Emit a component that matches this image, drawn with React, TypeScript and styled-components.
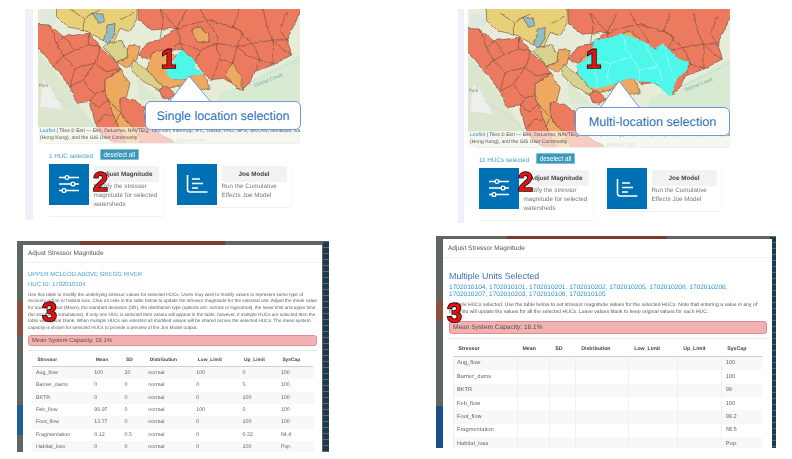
import React from 'react';
import styled, { createGlobalStyle } from 'styled-components';

const Global = createGlobalStyle`
  html, body { margin: 0; padding: 0; background: #fff; }
  body {
    width: 792px;
    height: 459px;
    overflow: hidden;
    font-family: "Liberation Sans", Arial, sans-serif;
    text-rendering: geometricPrecision;
  }
`;

const Page = styled.div`
  display: grid;
  grid-template-columns: 436px 356px;
  grid-template-rows: 235px 224px;
  width: 792px;
  height: 459px;
  overflow: hidden;
  filter: blur(0.45px);
`;

// top row: screenshot of the selection page
const SelectionShot = styled.section<{ $left: number; $strip: number; $gap: number; $width: number; $height: number }>`
  position: relative;
  display: flex;
  align-items: stretch;
  gap: ${(p) => p.$gap}px;
  margin: 9px 0 0 ${(p) => p.$left}px;
  width: ${(p) => p.$width}px;
  height: ${(p) => p.$height}px;
  &::before {
    content: '';
    flex: none;
    width: ${(p) => p.$strip}px;
    background: #eef1f7;
  }
`;

const ShotBody = styled.div`
  flex: 1;
  display: flex;
  flex-direction: column;
  min-width: 0;
`;

const MapFrame = styled.div<{ $height: number }>`
  position: relative;
  height: ${(p) => p.$height}px;
  overflow: hidden;
  background: #e7ecd9;
`;

const MapSvg = styled.svg`
  display: block;
  width: 100%;
  height: 100%;
`;

const Attribution = styled.div`
  position: absolute;
  left: 0;
  right: 0;
  bottom: 0;
  height: 15px;
  padding: 1px 0 0 2px;
  background: rgba(255, 255, 255, 0.62);
  font-size: 5.05px;
  line-height: 7px;
  color: #555;
  white-space: nowrap;
  overflow: hidden;
  b {
    font-weight: 400;
    color: #3f8fc0;
  }
`;

const Callout = styled.div<{ $left: number; $top: number; $width: number; $height: number; $size: number }>`
  position: absolute;
  left: ${(p) => p.$left}px;
  top: ${(p) => p.$top}px;
  width: ${(p) => p.$width}px;
  height: ${(p) => p.$height}px;
  display: flex;
  align-items: center;
  justify-content: center;
  box-sizing: border-box;
  background: #fff;
  border: 1px solid #6f97d8;
  border-radius: 6px;
  color: #1f70b8;
  font-size: ${(p) => p.$size}px;
  white-space: nowrap;
`;

const CalloutTip = styled.svg<{ $left: number; $top: number }>`
  position: absolute;
  left: ${(p) => p.$left}px;
  top: ${(p) => p.$top}px;
  overflow: visible;
  z-index: 1;
`;

const SelectRow = styled.div`
  display: flex;
  align-items: center;
  gap: 7px;
  border-top: 1px solid #eef0f4;
  margin-left: 7px;
  padding: 5px 0 0 4px;
`;

const SelectedCount = styled.span`
  font-size: 6.3px;
  color: #45a3c4;
  padding-top: 3px;
`;

const Deselect = styled.button`
  height: 11px;
  padding: 0 2.5px;
  border: 0.5px solid #7cc0d5;
  border-radius: 1px;
  background: #3e97b6;
  color: #fff;
  font: 6.3px "Liberation Sans", Arial, sans-serif;
  line-height: 10px;
`;

const CardRow = styled.div`
  display: flex;
  gap: 14px;
  margin: 4px 0 0 11px;
`;

const ToolCard = styled.div<{ $tall: boolean }>`
  display: flex;
  gap: 4.5px;
  width: 114px;
  height: ${(p) => (p.$tall ? 52 : 43)}px;
  box-shadow: 0 0.5px 1px #f1f1f1, 0.5px 0 1px #f6f6f6;
`;

const IconTile = styled.div`
  flex: none;
  display: flex;
  align-items: center;
  justify-content: center;
  width: 40px;
  height: 40.5px;
  background: #0070b4;
`;

const CardText = styled.div`
  display: flex;
  flex-direction: column;
  padding-top: 2px;
`;

const CardButton = styled.div`
  display: flex;
  align-items: center;
  justify-content: center;
  width: 65px;
  height: 16px;
  background: #f2f2f2;
  border-radius: 1px;
  font-size: 6.3px;
  font-weight: 700;
  color: #444;
`;

const CardDesc = styled.p`
  margin: 0;
  font-size: 6.3px;
  line-height: 9px;
  color: #777;
  white-space: nowrap;
`;

// numbers painted over the figure
const Marker = styled.span<{ $left: number; $top: number }>`
  position: absolute;
  left: ${(p) => p.$left}px;
  top: ${(p) => p.$top}px;
  z-index: 3;
  font-size: 27px;
  line-height: 27px;
  font-weight: 700;
  color: #e8100f;
  -webkit-text-stroke: 1.6px #111;
  paint-order: stroke fill;
`;

// bottom row: screenshot of the modal
const Backdrop = styled.section<{ $left: number; $top: number; $width: number; $height: number; $pad: string; $map: string }>`
  position: relative;
  box-sizing: border-box;
  margin: ${(p) => p.$top}px 0 0 ${(p) => p.$left}px;
  width: ${(p) => p.$width}px;
  height: ${(p) => p.$height}px;
  padding: ${(p) => p.$pad};
  overflow: hidden;
  background:
    repeating-linear-gradient(180deg, rgba(160, 140, 120, 0.55) 0 1px, transparent 1px 6px) right / 6px 100% no-repeat,
    linear-gradient(#1c3a52, #1c3a52) right / 6px 100% no-repeat,
    ${(p) => p.$map},
    #5f6660;
`;

const Modal = styled.div`
  height: 100%;
  background: #fff;
  overflow: hidden;
`;

const ModalHeader = styled.div<{ $height: number; $size: number }>`
  display: flex;
  align-items: center;
  box-sizing: border-box;
  height: ${(p) => p.$height}px;
  padding-left: 5px;
  border-bottom: 0.5px solid #f0f0f0;
  font-size: ${(p) => p.$size}px;
  color: #555;
`;

const ModalBody = styled.div<{ $pad: string }>`
  padding: ${(p) => p.$pad};
`;

const UnitName = styled.div`
  font-size: 6px;
  line-height: 10px;
  color: #4a9fd1;
  white-space: nowrap;
`;

const MultiTitle = styled.div`
  font-size: 8.9px;
  line-height: 12px;
  color: #3f70b2;
`;

const HucList = styled.div`
  margin-top: 2.2px;
  font-size: 6.55px;
  line-height: 7px;
  color: #2f93cc;
  white-space: nowrap;
`;

const Blurb = styled.p<{ $top: number; $line: number; $size: number }>`
  margin: ${(p) => p.$top}px 0 0;
  font-size: ${(p) => p.$size}px;
  line-height: ${(p) => p.$line}px;
  color: #5a5a5a;
  white-space: nowrap;
`;

const CapacityAlert = styled.div<{ $height: number; $top: number; $size: number }>`
  display: flex;
  align-items: center;
  box-sizing: border-box;
  height: ${(p) => p.$height}px;
  margin-top: ${(p) => p.$top}px;
  padding-left: 3px;
  background: #f1b2b4;
  border: 0.5px solid #e58b8f;
  border-radius: 3px;
  font-size: ${(p) => p.$size}px;
  color: #5c4a44;
`;

const Rule = styled.div<{ $top: number }>`
  height: 1px;
  margin-top: ${(p) => p.$top}px;
  background: #e8ebef;
`;

const StressTable = styled.table<{ $width: number; $cols: string; $head: number; $row: number; $size: number; $grid: boolean }>`
  display: block;
  width: ${(p) => p.$width}px;
  margin: 3px 0 0 3.5px;
  font-size: ${(p) => p.$size}px;
  color: #666;
  thead, tbody {
    display: block;
  }
  tr {
    display: grid;
    grid-template-columns: ${(p) => p.$cols};
  }
  th {
    display: flex;
    align-items: center;
    box-sizing: border-box;
    height: ${(p) => p.$head}px;
    padding: 0 0 0 6px;
    font-size: 0.92em;
    font-weight: 700;
    color: #444;
    border-bottom: 1px solid #cfcfcf;
  }
  td {
    display: flex;
    align-items: center;
    box-sizing: border-box;
    height: ${(p) => p.$row}px;
    padding: 0 0 0 3.5px;
    border-left: 0.5px solid ${(p) => (p.$grid ? '#f0f0f0' : 'transparent')};
  }
  tbody tr:nth-child(odd) {
    background: #f8f8f8;
  }
`;

const columns = ['Stressor', 'Mean', 'SD', 'Distribution', 'Low_Limit', 'Up_Limit', 'SysCap'];

const singleRows = [
  ['Aug_flow', '100', '20', 'normal', '100', '0', '100'],
  ['Barrier_dams', '0', '0', 'normal', '0', '5', '100'],
  ['BKTR', '0', '0', 'normal', '0', '100', '100'],
  ['Feb_flow', '99.97', '0', 'normal', '100', '0', '100'],
  ['Foot_flow', '13.77', '0', 'normal', '0', '100', '100'],
  ['Fragmentation', '0.12', '0.5', 'normal', '0', '0.32', '64.4'],
  ['Habitat_loss', '0', '0', 'normal', '0', '100', 'Pop.'],
];

const multiRows = [
  ['Aug_flow', '', '', '', '', '', '100'],
  ['Barrier_dams', '', '', '', '', '', '100'],
  ['BKTR', '', '', '', '', '', '99'],
  ['Feb_flow', '', '', '', '', '', '100'],
  ['Foot_flow', '', '', '', '', '', '99.2'],
  ['Fragmentation', '', '', '', '', '', '68.5'],
  ['Habitat_loss', '', '', '', '', '', 'Pop.'],
];

const red = '#ec7a5e';
const orange = '#eca95f';
const yellow = '#e8d078';
const olive = '#d9d28c';
const lake = '#90bdc9';
const cyan = '#4ef8ea';

const basins: [string, string][] = [
  ['105,-40 355,-40 350,60 330,95 300,85 280,130 240,115 190,90 140,80 110,50', yellow],
  ['218,40 248,42 255,65 235,70', lake],
  ['262,75 285,70 283,105 268,135 250,120', lake],
  ['265,130 300,122 325,150 320,175 290,185 250,140', olive],
  ['325,135 360,140 350,180 320,205 290,185 320,175', orange],
  ['340,180 380,210 430,260 420,272 370,245 333,210', olive],
  ['355,-40 860,-40 845,27 825,70 800,120 815,165 760,195 705,215 690,250 660,270 640,255 610,235 575,240 550,220 525,185 510,165 487,150 440,150 400,185 355,165 385,125 420,120 470,85 395,90 355,60', red],
  ['-20,70 90,75 130,110 205,100 240,140 290,185 300,210 255,240 255,270 265,300 300,340 340,385 380,430 300,445 230,390 210,305 170,310 150,260 100,200 54,145', red],
  ['380,210 395,160 430,150 470,165 440,210 465,240 500,235 530,220 550,222 570,265 530,275 505,250 450,265 430,260', orange],
  ['515,90 535,82 570,100 565,130 530,125', orange],
  ['615,225 640,190 665,235 668,275 640,255', orange],
  ['255,240 300,210 330,250 320,290 300,300 305,350 350,385 365,430 320,440 280,345 265,300 255,270', orange],
  ['300,295 340,300 370,320 375,360 400,390 470,430 490,450 380,450 340,385 300,340', red],
  ['418,268 440,260 470,285 445,297 425,290', red],
];

const ridges = [
  '90,75 110,130 130,110 165,150 130,170 100,200',
  '130,170 165,205 150,260 190,240 225,285 210,305',
  '165,150 205,135 240,140 225,190 260,215 300,210',
  '225,190 190,240',
  '130,170 110,130',
  '205,100 205,135',
  '165,205 225,190',
  '225,285 255,270',
  '210,305 240,320 265,300',
  '230,370 255,345 280,345',
  '470,85 480,130 440,150',
  '480,130 540,150 590,130 650,140 700,130 760,120 800,120',
  '590,130 600,180 575,240',
  '650,140 640,190',
  '700,130 720,180 705,215',
  '420,27 470,85 560,60 640,80 700,130',
  '560,60 540,27',
  '640,80 660,27',
  '730,27 740,80 760,120 760,195',
  '800,40 780,90 800,120',
  '600,180 640,190',
  '540,150 525,185',
  '480,130 490,150',
  '650,140 690,170 720,180',
  '760,120 790,150 815,165',
  '720,180 760,195',
  '420,120 430,60 420,27',
  '470,85 500,27',
  '560,60 590,100 590,130',
  '640,80 670,100 650,140',
  '150,27 190,55 240,30',
  '190,55 190,90',
  '300,60 340,40',
  '265,300 300,340 285,370',
];

const selectedOne = '433,210 460,190 470,165 487,150 510,165 525,185 527,205 550,222 510,228 480,240 450,235';
const selectedMany = '437,200 465,180 490,135 490,120 540,112 575,100 610,110 640,125 670,145 700,130 725,160 750,180 775,185 770,205 735,245 720,290 700,270 660,245 630,245 605,235 575,240 545,255 500,265 480,260 445,225';
const selectedLines = [
  '490,180 540,190 600,170 630,210 680,200 700,240',
  '575,100 590,150 600,170',
  '640,125 660,165 680,200',
  '700,130 710,170 735,245',
  '540,190 530,230 545,255',
  '490,180 500,240 500,265',
  '630,210 625,245',
];

function BasinMap({ id, viewBox, shift, selection, lines }: { id: string; viewBox: string; shift: number[]; selection: string; lines?: string[] }) {
  return (
    <MapSvg viewBox={viewBox} preserveAspectRatio="none">
      <defs>
        {/* wobble the straight polygon edges so they read as drainage divides */}
        <filter id={id} x="-5%" y="-5%" width="110%" height="110%">
          <feTurbulence type="fractalNoise" baseFrequency="0.045" numOctaves="2" seed="4" />
          <feDisplacementMap in="SourceGraphic" scale="11" xChannelSelector="R" yChannelSelector="G" />
        </filter>
      </defs>
      <rect x="0" y="-50" width="1000" height="600" fill="#e6ecd8" />
      <g transform={`translate(${shift[0]} ${shift[1]})`}>
        <path d="M60 30 L120 30 L100 80 L60 70Z" fill="#dfe8dc" />
        <path d="M54 150 L140 260 L240 400 L54 400Z" fill="#dce6cf" />
        <path d="M70 240 L90 260 L130 330 L60 320Z" fill="#eeeeea" />
        <path d="M600 280 L700 240 L860 150 L860 400 L560 400Z" fill="#d9ead2" />
        <path d="M350 230 L420 300 L360 300Z" fill="#dce9cf" />
        <path d="M680 250 Q760 220 850 170" fill="none" stroke="#a9d4d8" strokeWidth="1.5" />
        <path d="M100 290 Q170 320 220 380" fill="none" stroke="#c9c9d2" strokeWidth="1.5" />
        <g filter={`url(#${id})`}>
          {basins.map(([points, fill]) => (
            <polygon key={points} points={points} fill={fill} stroke="#6d4a3c" strokeWidth="1.8" strokeLinejoin="round" />
          ))}
          {ridges.map((points) => (
            <polyline key={points} points={points} fill="none" stroke="#6d4a3c" strokeWidth="1.8" strokeLinejoin="round" />
          ))}
        </g>
        <text x="705" y="262" transform="rotate(-22 705 262)" fontSize="15" fill="#7fa9ad" fontFamily="Liberation Sans">Dismal Creek</text>
        <text x="56" y="262" fontSize="14" fill="#888" fontFamily="Liberation Sans">Park</text>
        <text x="470" y="426" fontSize="14" fill="#b0a090" fontFamily="Liberation Sans">National Park</text>
      </g>
      <g filter={`url(#${id})`}>
        <polygon points={selection} fill={cyan} />
        {lines?.map((points) => (
          <polyline key={points} points={points} fill="none" stroke="#c6fbf6" strokeWidth="1.6" />
        ))}
      </g>
    </MapSvg>
  );
}

function SlidersIcon() {
  return (
    <svg width="22" height="20" viewBox="0 0 22 20" fill="none" stroke="#fff" strokeWidth="1.4">
      <path d="M1 3.5H7M11 3.5H21M1 10H13M17 10H21M1 16.5H4M8 16.5H21" />
      <circle cx="9" cy="3.5" r="1.9" />
      <circle cx="15" cy="10" r="1.9" />
      <circle cx="6" cy="16.5" r="1.9" />
    </svg>
  );
}

function ChartIcon() {
  return (
    <svg width="22" height="20" viewBox="0 0 22 20" fill="none" stroke="#fff" strokeWidth="1.6">
      <path d="M1.5 1V15.5Q1.5 18 4 18H21.5" />
      <path d="M6 5H14M6 9.5H17M6 14H12" />
    </svg>
  );
}

function Tools() {
  return (
    <CardRow>
      <ToolCard $tall>
        <IconTile>
          <SlidersIcon />
        </IconTile>
        <CardText>
          <CardButton>Adjust Magnitude</CardButton>
          <CardDesc>
            Modify the stressor
            <br />
            magnitude for selected
            <br />
            watersheds
          </CardDesc>
        </CardText>
      </ToolCard>
      <ToolCard $tall={false}>
        <IconTile>
          <ChartIcon />
        </IconTile>
        <CardText>
          <CardButton>Joe Model</CardButton>
          <CardDesc>
            Run the Cumulative
            <br />
            Effects Joe Model
          </CardDesc>
        </CardText>
      </ToolCard>
    </CardRow>
  );
}

function Attrib() {
  return (
    <Attribution>
      <b>Leaflet</b> | Tiles © Esri — Esri, DeLorme, NAVTEQ, TomTom, Intermap, iPC, USGS, FAO, NPS, NRCAN, GeoBase, Kada
      <br />
      (Hong Kong), and the GIS User Community
    </Attribution>
  );
}

function Table({ rows, cols, tableWidth, head, row, size, grid }: { rows: string[][]; cols: string; tableWidth: number; head: number; row: number; size: number; grid: boolean }) {
  return (
    <StressTable $width={tableWidth} $cols={cols} $head={head} $row={row} $size={size} $grid={grid}>
      <thead>
        <tr>
          {columns.map((c) => (
            <th key={c}>{c}</th>
          ))}
        </tr>
      </thead>
      <tbody>
        {rows.map((r) => (
          <tr key={r[0]}>
            {r.map((v, i) => (
              <td key={i}>{v}</td>
            ))}
          </tr>
        ))}
      </tbody>
    </StressTable>
  );
}

export default function App() {
  return (
    <>
      <Global />
      <Page>
        <SelectionShot $left={25} $strip={8} $gap={5} $width={275} $height={211}>
          <ShotBody>
            <MapFrame $height={134}>
              <BasinMap id="wobble-one" viewBox="54 27 786 403" shift={[0, 0]} selection={selectedOne} />
              <Attrib />
            </MapFrame>
            <SelectRow>
              <SelectedCount>1 HUC selected</SelectedCount>
              <Deselect>deselect all</Deselect>
            </SelectRow>
            <Tools />
          </ShotBody>
          <CalloutTip $left={145} $top={67} width="40" height="26">
            <polygon points="0,25 19,0 40,25" fill="#fff" />
            <polyline points="0,25 19,0 40,25" fill="none" stroke="#6f97d8" strokeWidth="1" />
          </CalloutTip>
          <Callout $left={120} $top={92} $width={156} $height={29} $size={12.4}>
            Single location selection
          </Callout>
          <Marker $left={136} $top={37}>1</Marker>
          <Marker $left={68} $top={160}>2</Marker>
        </SelectionShot>

        <SelectionShot $left={22} $strip={6} $gap={4} $width={272} $height={214}>
          <ShotBody>
            <MapFrame $height={138}>
              <BasinMap id="wobble-many" viewBox="114 27 784 413" shift={[60, 12]} selection={selectedMany} lines={selectedLines} />
              <Attrib />
            </MapFrame>
            <SelectRow>
              <SelectedCount>11 HUCs selected</SelectedCount>
              <Deselect>deselect all</Deselect>
            </SelectRow>
            <Tools />
          </ShotBody>
          <CalloutTip $left={143} $top={72} width="38" height="26">
            <polygon points="0,26 18,0 38,26" fill="#fff" />
            <polyline points="0,26 18,0 38,26" fill="none" stroke="#6f97d8" strokeWidth="1" />
          </CalloutTip>
          <Callout $left={117} $top={98} $width={155} $height={29} $size={12.6}>
            Multi-location selection
          </Callout>
          <Marker $left={128} $top={37}>1</Marker>
          <Marker $left={60} $top={160}>2</Marker>
        </SelectionShot>

        <Backdrop
          $left={17}
          $top={6}
          $width={312}
          $height={211}
          $pad="4px 7px 0 6px"
          $map="linear-gradient(#7c3a30, #7c3a30) 63px 0 / 145px 4px no-repeat, linear-gradient(#8a5040, #8a5040) 0 60px / 6px 34px no-repeat, linear-gradient(#1e5f93, #1e5f93) 0 164px / 6px 30px no-repeat"
        >
          <Modal>
            <ModalHeader $height={18} $size={6.45}>Adjust Stressor Magnitude</ModalHeader>
            <ModalBody $pad="7px 5px 0 5px">
              <UnitName>UPPER MCLEOD ABOVE GREGG RIVER</UnitName>
              <UnitName>HUC ID: 1702010104</UnitName>
              <Blurb $top={1.7} $line={6.67} $size={4.66}>
                Use this table to modify the underlying stressor values for selected HUCs. Users may wish to modify values to represent some type of
                <br />
                recovery action or habitat loss. Click on cells in the table below to update the stressor magnitude for the selected unit. Adjust the mean value
                <br />
                for each stressor (Mean), the standard deviation (SD), the distribution type (options are: normal or lognormal), the lower limit and upper limit
                <br />
                (for stochastic simulations). If only one HUC is selected then values will appear in the table; however, if multiple HUCs are selected then the
                <br />
                table will appear blank. When multiple HUCs are selected all modified values will be shared across the selected HUCs. The mean system
                <br />
                capacity is shown for selected HUCs to provide a preview of the Joe Model output.
              </Blurb>
              <CapacityAlert $height={11} $top={3.3} $size={5.85}>Mean System Capacity: 18.1%</CapacityAlert>
              <Rule $top={4} />
              <Table rows={singleRows} cols="58.3px 30.3px 23.7px 48px 46.3px 38.3px 37px" tableWidth={282} head={13} row={12.3} size={5.3} grid={false} />
            </ModalBody>
          </Modal>
          <Marker $left={25} $top={58}>3</Marker>
        </Backdrop>

        <Backdrop
          $left={0}
          $top={1}
          $width={340}
          $height={212}
          $pad="3px 4px 0 7px"
          $map="linear-gradient(#7c3a30, #7c3a30) 71px 0 / 160px 3px no-repeat, linear-gradient(#8a5040, #8a5040) 0 65px / 7px 20px no-repeat, linear-gradient(#1c4f85, #1c4f85) 0 170px / 7px 42px no-repeat"
        >
          <Modal>
            <ModalHeader $height={19} $size={6.55}>Adjust Stressor Magnitude</ModalHeader>
            <ModalBody $pad="12px 5.5px 0 6px">
              <MultiTitle>Multiple Units Selected</MultiTitle>
              <HucList>
                1702010104, 1702010101, 1702010201, 1702010202, 1702010205, 1702010208, 1702010206,
                <br />
                1702010207, 1702010203, 1702010106, 1702010105
              </HucList>
              <Blurb $top={4} $line={7.3} $size={5.1}>
                Multiple HUCs selected. Use the table below to set stressor magnitude values for the selected HUCs. Note that entering a value in any of
                <br />
                the units will update the values for all the selected HUCs. Leave values blank to keep original values for each HUC.
              </Blurb>
              <CapacityAlert $height={13} $top={4} $size={6.55}>Mean System Capacity: 16.1%</CapacityAlert>
              <Rule $top={4} />
              <Table rows={multiRows} cols="64px 32.7px 26px 53px 49px 44px 41px" tableWidth={309.7} head={15} row={13.4} size={5.7} grid />
            </ModalBody>
          </Modal>
          <Marker $left={11} $top={64}>3</Marker>
        </Backdrop>
      </Page>
    </>
  );
}
